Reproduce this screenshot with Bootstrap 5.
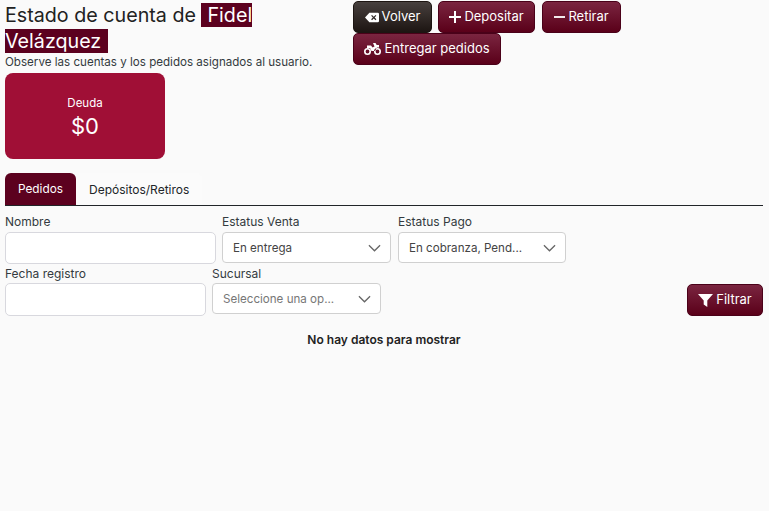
<!DOCTYPE html>
<html lang="es"><head><meta charset="utf-8">
<title>Estado de cuenta</title>
<link href="https://cdn.jsdelivr.net/npm/bootstrap@5.3.0/dist/css/bootstrap.min.css" rel="stylesheet">
<style>
body{background:#fafafa;font-family:Inter,"Liberation Sans",sans-serif;color:#212529;font-size:12px;height:511px;overflow:hidden}
.shell{padding:0 6px 0 5px}
.top-head{height:73px}
.title-col{width:348px;flex:none}
.page-title{font-size:19.7px;line-height:26px;font-weight:400;margin:2px 0 0;color:#222}
.page-title span{background:#5c011f;color:#fff;padding:0 7px 0 6px}
.subtitle{font-size:11.6px;line-height:14px;color:#343a40;margin:1px 0 0}
.act-col{width:290px;flex:none;padding-top:1px;column-gap:6px}
.act{height:32px;padding:0;font-size:13px;border:1px solid #4a0119;border-radius:5px;color:#fff;display:inline-flex;align-items:center;justify-content:center;gap:3px;background:linear-gradient(#7a2540,#5a0019);white-space:nowrap}
.act.dark{background:linear-gradient(#47403e,#1d1512);border-color:#1d1512}
.act svg{fill:#fff;flex:none}
.bt-v{width:79px}.bt-d{width:97px}.bt-r{width:79px;margin-left:1px}.bt-e{width:148px}
.debt{width:160px;height:86px;background:#a00f36;border-radius:8px;color:#fff}
.debt .lbl{font-size:11.5px;line-height:14px;margin-top:3px}
.debt .val{font-size:22px;line-height:28px;margin-top:2px}
.tabrow{margin-top:14px;border-bottom:1px solid #212529;height:33px}
.tabitem{height:32px;padding:1px 13px 0;font-size:12px;display:flex;align-items:center;color:#212529;background:#fbfbfb;border-radius:6px 6px 0 0}
.tabitem.on{background:#5c011f;color:#fff;width:71px;font-size:11.8px}
.fld label{display:block;font-size:12px;line-height:14px;color:#343a40;margin-bottom:3px}
.inp{height:32px;background:#fff;border:1px solid #d8d8de;border-radius:5px;display:block}
.sel{height:31px;background:#fff;border:1px solid #d0d0d0;border-radius:4px;padding:2px 10px 0;font-size:11.6px;color:#444;display:flex;align-items:center;justify-content:space-between}
.sel.ph{color:#777}
.sel svg{stroke:#666;fill:none;stroke-width:1.4;margin-right:-1px;margin-top:-2px}
.r1{margin-top:9px;height:52px}
.r2{height:59px}
.r2 .fld label{margin-bottom:2px}
.w211{width:211px}.w201{width:201px}.w169{width:169px}.w168{width:168px}
.empty{font-size:12px;font-weight:600;text-align:center;margin:6px 0 0;line-height:16px;color:#222}
.filt{margin-top:17px;width:76px}
.gap-a{margin-left:6px}.gap-b{margin-left:7px}
.tall{height:33px}
</style></head>
<body>
<div class="shell">
 <div class="d-flex top-head">
  <div class="title-col">
   <h1 class="page-title">Estado de cuenta de <span>Fidel Velázquez</span></h1>
   <p class="subtitle">Observe las cuentas y los pedidos asignados al usuario.</p>
  </div>
  <div class="act-col d-flex flex-wrap align-content-start">
   <button class="act dark bt-v" type="button"><svg width="14" height="11" viewBox="0 0 16 12"><path fill-rule="evenodd" d="M5 0.5h9.5a1.5 1.5 0 0 1 1.5 1.5v8a1.5 1.5 0 0 1-1.5 1.5H5L0 6zM8 3L7 4l2 2-2 2 1 1 2-2 2 2 1-1-2-2 2-2-1-1-2 2z"/></svg>Volver</button>
   <button class="act bt-d" type="button"><svg width="12" height="12" viewBox="0 0 12 12"><path d="M5 0h2v5h5v2H7v5H5V7H0V5h5z"/></svg>Depositar</button>
   <button class="act bt-r" type="button"><svg width="11" height="12" viewBox="0 0 12 12"><path d="M0 5h12v2H0z"/></svg>Retirar</button>
   <button class="act bt-e" type="button"><svg width="17" height="12" viewBox="0 0 17 12"><path fill-rule="evenodd" d="M3.5 5a3.5 3.5 0 1 0 0 7 3.5 3.5 0 0 0 0-7zm0 1.6a1.9 1.9 0 1 1 0 3.8 1.9 1.9 0 0 1 0-3.8zM13.5 5a3.5 3.5 0 1 0 0 7 3.5 3.5 0 0 0 0-7zm0 1.6a1.9 1.9 0 1 1 0 3.8 1.9 1.9 0 0 1 0-3.8zM9 0h2.5l1.2 2H15v2.4h-2l-2 3.6H7.5L6 5H3V2.5h4L8.5 4.5l2-1z"/></svg>Entregar pedidos</button>
  </div>
 </div>
 <div class="debt d-flex flex-column align-items-center justify-content-center">
  <div class="lbl">Deuda</div>
  <div class="val">$0</div>
 </div>
 <div class="tabrow d-flex">
  <div class="tabitem on">Pedidos</div>
  <div class="tabitem">Depósitos/Retiros</div>
 </div>
 <div class="d-flex r1">
  <div class="fld w211"><label>Nombre</label><span class="inp"></span></div>
  <div class="fld w169 gap-a"><label>Estatus Venta</label><div class="sel">En entrega<svg width="13" height="8" viewBox="0 0 14 8"><path d="M1 1l6 6 6-6"/></svg></div></div>
  <div class="fld w168 gap-b"><label>Estatus Pago</label><div class="sel">En cobranza, Pend...<svg width="13" height="8" viewBox="0 0 14 8"><path d="M1 1l6 6 6-6"/></svg></div></div>
 </div>
 <div class="d-flex r2">
  <div class="fld w201"><label>Fecha registro</label><span class="inp tall"></span></div>
  <div class="fld w169 gap-a"><label>Sucursal</label><div class="sel ph">Seleccione una op...<svg width="13" height="8" viewBox="0 0 14 8"><path d="M1 1l6 6 6-6"/></svg></div></div>
  <div class="ms-auto"><button class="act filt" type="button"><svg width="15" height="13" viewBox="0 0 15 13"><path d="M0 0h15L9.3 6.5V13L5.7 10.5v-4z"/></svg>Filtrar</button></div>
 </div>
 <p class="empty">No hay datos para mostrar</p>
</div>
</body></html>
